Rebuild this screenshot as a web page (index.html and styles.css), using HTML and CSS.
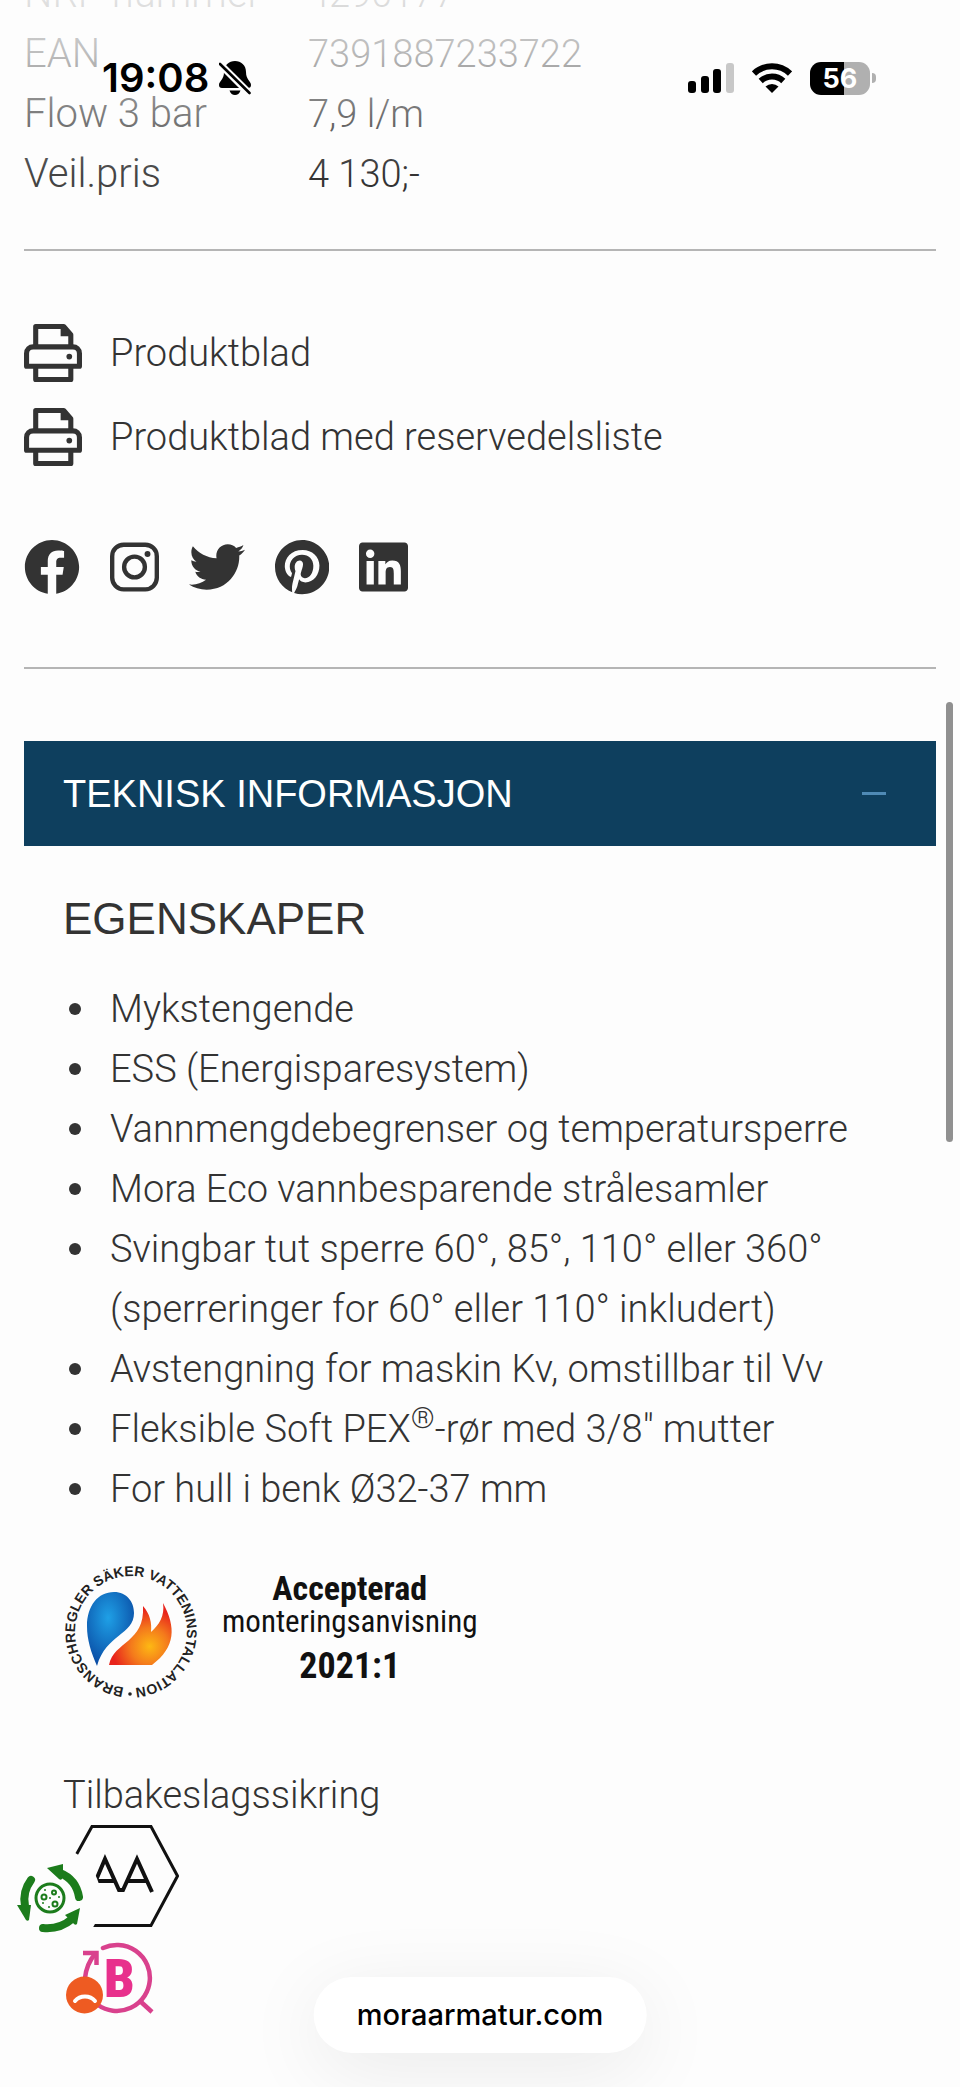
FILE: index.html
```
<!DOCTYPE html>
<html lang="no">
<head>
  <meta charset="UTF-8">
  <meta name="viewport" content="width=device-width, initial-scale=1">
  <title>Mora Armatur</title>
  <link rel="stylesheet" href="styles.css">
</head>
<body>
  <header class="statusbar">
    <div class="status-left">
      <span class="time">19:08</span>
      <svg class="bell" viewBox="0 0 32 34" aria-hidden="true">
        <path d="M16 0c6 0 11 4 11 11 0 8 5 9 5 13 0 2-1 3-3 3H3c-2 0-3-1-3-3 0-4 5-5 5-13C5 4 10 0 16 0z"/>
        <path d="M10.500 29.500h11c-1 3-3 4.500-5.500 4.500s-4.500-1.500-5.500-4.500z"/>
        <path d="M0 2l31 31" stroke="#fdfdfd" stroke-width="7"/>
        <path d="M1 3l29.500 29" stroke="#000" stroke-width="2.600" stroke-linecap="round"/>
      </svg>
    </div>
    <div class="status-right">
      <svg class="signal" viewBox="0 0 46 30" aria-hidden="true">
        <rect y="18" width="8" height="12" rx="3"/>
        <rect x="13" y="13" width="8" height="17" rx="3"/>
        <rect x="25" y="6" width="8" height="24" rx="3"/>
        <rect x="38" width="8" height="30" rx="3" fill="#c8c8c8"/>
      </svg>
      <svg class="wifi" viewBox="0 0 40 30" aria-hidden="true">
        <g fill="none" stroke="#000" stroke-width="6">
          <path d="M2 10.500a26 26 0 0 1 36 0"/>
          <path d="M8.700 18a16.500 16.500 0 0 1 22.600 0"/>
        </g>
        <path d="M20 30l-6.500-6.500a9.500 9.500 0 0 1 13 0z"/>
      </svg>
      <div class="battery"><span class="battery-level">56</span><i class="battery-nub"></i></div>
    </div>
  </header>

  <main class="page">
    <table class="specs">
      <tr><th scope="row">NRF-nummer</th><td>4290177</td></tr>
      <tr><th scope="row">EAN</th><td>7391887233722</td></tr>
      <tr><th scope="row">Flow 3 bar</th><td>7,9 l/m</td></tr>
      <tr><th scope="row">Veil.pris</th><td>4 130;-</td></tr>
    </table>

    <hr>

    <svg width="0" height="0" class="defs" aria-hidden="true">
      <symbol id="printer" viewBox="0 0 57 57">
        <g fill="none" stroke="#333" stroke-width="5" stroke-linejoin="round">
          <path d="M11.500 21V2.500H39l7 8V21"/>
          <path d="M2.500 41.500V29c0-4 3-6.500 6.500-6.500h39c3.500 0 6.500 2.500 6.500 6.500v12.500z"/>
          <path d="M11.500 43v11.500H46V43"/>
        </g>
        <path d="M36 2h4l6 7v3H36z" fill="#333"/>
        <circle cx="44.500" cy="32" r="2.800" fill="#333"/>
      </symbol>
    </svg>
    <div class="downloads">
      <a href="#"><svg class="printer"><use href="#printer"/></svg>Produktblad</a>
      <a href="#"><svg class="printer"><use href="#printer"/></svg>Produktblad med reservedelsliste</a>
    </div>

    <nav class="social">
      <a href="#" aria-label="Facebook"><svg viewBox="0 0 512 512"><path d="M504 256C504 119 393 8 256 8S8 119 8 256c0 123.780 90.690 226.380 209.250 245V327.690h-63V256h63v-54.640c0-62.150 37-96.480 93.670-96.480 27.140 0 55.520 4.840 55.520 4.840v61h-31.280c-30.800 0-40.410 19.120-40.410 38.730V256h68.780l-11 71.690h-57.780V501C413.310 482.380 504 379.780 504 256z"/></svg></a>
      <a href="#" aria-label="Instagram"><svg viewBox="0 0 448 512"><rect x="20" y="52" width="408" height="408" rx="105" fill="none" stroke="#333" stroke-width="40"/><circle cx="224" cy="256" r="95" fill="none" stroke="#333" stroke-width="40"/><circle cx="343" cy="137" r="27"/></svg></a>
      <a href="#" aria-label="Twitter"><svg viewBox="0 0 512 512"><path d="M459.370 151.716c.325 4.548.325 9.097.325 13.645 0 138.720-105.583 298.558-298.558 298.558-59.452 0-114.680-17.219-161.137-47.106 8.447.974 16.568 1.299 25.340 1.299 49.055 0 94.213-16.568 130.274-44.832-46.132-.975-84.792-31.188-98.112-72.772 6.498.974 12.995 1.624 19.818 1.624 9.421 0 18.843-1.300 27.614-3.573-48.081-9.747-84.143-51.980-84.143-102.985v-1.299c13.969 7.797 30.214 12.670 47.431 13.319-28.264-18.843-46.781-51.005-46.781-87.391 0-19.492 5.197-37.360 14.294-52.954 51.655 63.675 129.300 105.258 216.365 109.807-1.624-7.797-2.599-15.918-2.599-24.040 0-57.828 46.782-104.934 104.934-104.934 30.213 0 57.502 12.670 76.670 33.137 23.715-4.548 46.456-13.320 66.599-25.340-7.798 24.366-24.366 44.833-46.132 57.827 21.117-2.273 41.584-8.122 60.426-16.243-14.292 20.791-32.161 39.308-52.628 54.253z"/></svg></a>
      <a href="#" aria-label="Pinterest"><svg viewBox="0 0 496 512"><path d="M496 256c0 137-111 248-248 248-25.600 0-50.200-3.900-73.400-11.100 10.100-16.500 25.200-43.500 30.800-65 3-11.600 15.400-59 15.400-59 8.100 15.400 31.700 28.500 56.800 28.500 74.800 0 128.700-68.800 128.700-154.300 0-81.900-66.900-143.200-152.900-143.200-107 0-163.900 71.800-163.900 150.100 0 36.400 19.400 81.700 50.300 96.100 4.700 2.200 7.200 1.200 8.300-3.300.8-3.400 5-20.300 6.900-28.100.6-2.500.3-4.700-1.700-7.100-10.100-12.500-18.300-35.300-18.300-56.600 0-54.700 41.400-107.600 112-107.600 60.900 0 103.600 41.500 103.600 100.900 0 67.100-33.900 113.600-78 113.600-24.300 0-42.600-20.100-36.700-44.800 7-29.500 20.500-61.300 20.500-82.600 0-19-10.200-34.900-31.400-34.900-24.900 0-44.900 25.700-44.900 60.200 0 22 7.400 36.800 7.400 36.800s-24.500 103.800-29 123.200c-5 21.400-3 51.600-.9 71.200C65.400 450.900 0 361.100 0 256 0 119 111 8 248 8s248 111 248 248z"/></svg></a>
      <a href="#" aria-label="LinkedIn"><svg viewBox="0 0 448 512"><path d="M416 32H31.900C14.300 32 0 46.500 0 64.300v383.400C0 465.500 14.300 480 31.900 480H416c17.600 0 32-14.500 32-32.300V64.300c0-17.800-14.400-32.300-32-32.300zM135.400 416H69V202.200h66.500V416zm-33.200-243c-21.300 0-38.500-17.300-38.500-38.500S80.900 96 102.200 96c21.200 0 38.500 17.300 38.500 38.500 0 21.300-17.200 38.500-38.500 38.500zm282.100 243h-66.400V312c0-24.800-.5-56.700-34.500-56.700-34.600 0-39.900 27-39.900 54.900V416h-66.400V202.200h63.700v29.200h.9c8.900-16.800 30.600-34.500 62.200-34.500 66.500 0 78.800 43.800 78.800 100.900V416z"/></svg></a>
    </nav>

    <hr>

    <section>
      <h2 class="accordion"><button type="button" aria-expanded="true">TEKNISK INFORMASJON<span class="minus"></span></button></h2>
      <div class="panel">
        <h3>EGENSKAPER</h3>
        <ul>
          <li>Mykstengende</li>
          <li>ESS (Energisparesystem)</li>
          <li>Vannmengdebegrenser og temperatursperre</li>
          <li>Mora Eco vannbesparende strålesamler</li>
          <li>Svingbar tut sperre 60°, 85°, 110° eller 360° (sperreringer for 60° eller 110° inkludert)</li>
          <li>Avstengning for maskin Kv, omstillbar til Vv</li>
          <li>Fleksible Soft PEX<sup>®</sup>-rør med 3/8" mutter</li>
          <li>For hull i benk Ø32-37 mm</li>
        </ul>

        <div class="approval">
          <svg class="seal" viewBox="0 0 136 136">
            <defs>
              <path id="ring" d="M62 123.700A56 56 0 1 1 74 123.700"/>
              <radialGradient id="water" cx=".45" cy=".35" r=".65">
                <stop offset="0" stop-color="#1fa0e6"/>
                <stop offset="1" stop-color="#0a4ea6"/>
              </radialGradient>
              <radialGradient id="fire" cx=".65" cy=".7" r=".6">
                <stop offset="0" stop-color="#fdb813"/>
                <stop offset=".5" stop-color="#f47a1c"/>
                <stop offset="1" stop-color="#e8241c"/>
              </radialGradient>
            </defs>
            <text class="seal-text"><textPath href="#ring" startOffset="1">BRANSCHREGLER SÄKER VATTENINSTALLATION</textPath></text>
            <circle cx="67" cy="130" r="1.800" fill="#222"/>
            <path d="M34 102c-6-14-10-26-10-40 0-20 11-34 27-34 13 0 20 10 20 21 0 22-28 21-37 53z" fill="url(#water)"/>
            <path d="M46 101c5-24 36-22 34-59 7 8 9 17 8 26 8-7 14-16 12-29 13 24 13 44-11 62z" fill="url(#fire)"/>
          </svg>
          <div class="approval-text">
            <strong>Accepterad</strong>
            <span>monteringsanvisning</span>
            <strong class="year">2021:1</strong>
          </div>
        </div>

        <p>Tilbakeslagssikring</p>
        <svg class="hexagon" viewBox="0 0 116 102" fill="none" stroke="#111">
          <path d="M29 1.500h59L114.500 51 88 100.500H29L1.500 51z" stroke-width="3"/>
          <path d="M28 67l14-33 14 31h4l14-31 15 33M32 56h19M64 56h20" stroke-width="4"/>
        </svg>
      </div>
    </section>
  </main>

  <button type="button" class="widget cookie" aria-label="Informasjonskapsler">
    <svg viewBox="0 0 66 70">
      <g fill="none" stroke="#1c7c1c" stroke-width="8" stroke-linecap="round">
        <path d="M14 16C8 24 6 32 8 42"/>
        <path d="M43 9c10 4 17 12 19 24"/>
        <path d="M26 64c11 1 21-2 29-9"/>
      </g>
      <g fill="#1c7c1c">
        <path d="M0 41l14 0-2 15c-1 1-2 1-3 0z"/>
        <path d="M30 4l16-4v6l-1 9c-1 1-2 1-3 0z"/>
        <path d="M48 51l15-7-3 16c-1 1-2 1-3 0z"/>
      </g>
      <circle cx="33" cy="34" r="14" fill="none" stroke="#1c7c1c" stroke-width="3"/>
      <g fill="none" stroke="#1c7c1c" stroke-width="2">
        <circle cx="27" cy="33" r="2.500"/><circle cx="37" cy="28.500" r="2"/><circle cx="38" cy="40" r="2.500"/>
      </g>
      <g fill="#1c7c1c">
        <circle cx="33" cy="34" r="1"/><circle cx="42" cy="33" r="1"/><circle cx="32" cy="43" r="1"/><circle cx="28" cy="26" r="1"/><circle cx="26" cy="39" r="1"/>
      </g>
    </svg>
  </button>

  <button type="button" class="widget badge" aria-label="B">
    <svg viewBox="0 0 88 72">
      <g fill="none" stroke="#d9418d" stroke-width="4.500">
        <path d="M37 6A33 33 0 1 1 32 63" stroke-linecap="round"/>
        <path d="M74 59l12 11"/>
        <path d="M19 36c1-9 4-17 10-24"/>
        <path d="M17 11h13.500v12"/>
      </g>
      <text x="38" y="55" class="badge-letter">B</text>
      <circle cx="18.500" cy="53" r="18.500" fill="#ee5b22"/>
      <path d="M9 59c5-6 15-6 20 0" fill="none" stroke="#fff" stroke-width="4" stroke-linecap="round"/>
    </svg>
  </button>

  <div class="scrollbar"></div>
  <a class="address" href="#">moraarmatur.com</a>
</body>
</html>
```
FILE: styles.css
```
* {
  box-sizing: border-box;
}
body {
  margin: 0;
  position: relative;
  min-height: 100vh;
  overflow: hidden;
  background: #fdfdfd;
  color: #333;
  font-family: Roboto, "Liberation Sans", sans-serif;
  font-size: 38px;
  font-weight: 300;
  line-height: 60px;
}
a {
  color: inherit;
  text-decoration: none;
}
button {
  border: 0;
  padding: 0;
  font: inherit;
  cursor: pointer;
}
svg {
  display: block;
}

/* phone status bar, fades the page under it */
.statusbar {
  position: absolute;
  z-index: 2;
  top: 0;
  left: 0;
  right: 0;
  height: 176px;
  padding: 56px 84px 0 102px;
  display: flex;
  justify-content: space-between;
  align-items: flex-start;
  background: linear-gradient(rgba(253,253,253,.85), rgba(253,253,253,.65) 55px, rgba(253,253,253,.3) 115px, rgba(253,253,253,0));
  color: #000;
  font-family: Inter, sans-serif;
}
.status-left, .status-right {
  display: flex;
  align-items: center;
  height: 44px;
}
.status-left {
  gap: 10px;
}
.status-right {
  gap: 18px;
}
.time {
  font-size: 40px;
  font-weight: 600;
}
.bell {
  width: 32px;
  height: 34px;
}
.signal {
  width: 46px;
  height: 30px;
}
.wifi {
  width: 40px;
  height: 30px;
}
.battery {
  display: flex;
  align-items: center;
  gap: 2px;
}
.battery-level {
  width: 60px;
  height: 33px;
  border-radius: 11px;
  background: linear-gradient(90deg, #000 56%, #b0b0b0 56%);
  color: #fff;
  font-size: 27px;
  font-weight: 700;
  line-height: 33px;
  text-align: center;
}
.battery-nub {
  width: 4px;
  height: 10px;
  border-radius: 0 5px 5px 0;
  background: #b0b0b0;
}

/* page is scrolled, so the first row starts above the window */
.page {
  padding: 0 24px;
  margin-top: -36px;
}
.specs {
  width: 100%;
  border-collapse: collapse;
}
.specs th, .specs td {
  padding: 0;
  text-align: left;
}
.specs th {
  width: 284px;
  color: #444;
  font-size: 40px;
  font-weight: 350;
}
hr {
  margin: 72px 0;
  border: 0;
  height: 2px;
  background: #b5b5b5;
}
.specs + hr {
  margin-top: 45px;
}
.defs {
  position: absolute;
}
.downloads {
  display: flex;
  flex-direction: column;
  gap: 24px;
}
.downloads a {
  display: flex;
  align-items: center;
  gap: 28px;
}
.printer {
  width: 58px;
  height: 58px;
}
.social {
  display: flex;
  gap: 30px;
  margin-top: 72px;
}
.social svg {
  height: 56px;
  fill: #333;
}

.accordion {
  margin: 0;
  font-family: "Liberation Sans", Arial, sans-serif;
  font-size: 38px;
  font-weight: 400;
}
.accordion button {
  width: 100%;
  min-height: 105px;
  padding: 0 50px 0 39px;
  display: flex;
  align-items: center;
  justify-content: space-between;
  background: #0e3f5e;
  color: #fff;
}
.minus {
  width: 24px;
  height: 3px;
  background: #4f8ab5;
}
.panel {
  padding: 43px 39px 0;
}
h3 {
  margin: 0;
  font-family: "Liberation Sans", Arial, sans-serif;
  font-size: 44px;
  font-weight: 400;
}
ul {
  margin: 30px 0 0;
  padding-left: 47px;
  list-style: none;
}
li::before {
  content: "";
  display: inline-block;
  width: 12px;
  height: 12px;
  margin: 0 29px 0 -41px;
  border-radius: 50%;
  background: #333;
  vertical-align: 7px;
}
sup {
  font-size: 30px;
  line-height: 0;
}
.approval {
  display: flex;
  align-items: center;
  gap: 23px;
  margin-top: 45px;
}
.seal {
  width: 136px;
  height: 136px;
}
.seal-text {
  font: 700 14px "Liberation Sans", sans-serif;
  fill: #222;
}
.approval-text {
  display: flex;
  flex-direction: column;
  align-items: center;
  color: #111;
  font-family: "Liberation Sans Narrow", "Roboto Condensed", Roboto, sans-serif;
  font-size: 31px;
  font-weight: 400;
  line-height: 34px;
}
.approval-text strong {
  font-size: 34px;
}
.approval-text .year {
  font-size: 36px;
  line-height: 54px;
}
p {
  margin: 65px 0 0;
}
.hexagon {
  width: 116px;
  height: 102px;
}

/* floating things over the page */
.widget {
  position: absolute;
  background: none;
}
.cookie {
  left: -1px;
  bottom: 135px;
  padding: 18px;
  border-radius: 50%;
  background: #fdfdfd;
}
.cookie svg {
  width: 66px;
  height: 70px;
}
.badge {
  left: 66px;
  bottom: 73px;
}
.badge svg {
  width: 88px;
  height: 72px;
}
.badge-letter {
  font: 900 54px "Roboto Condensed", "Liberation Sans Narrow", Roboto, sans-serif;
  fill: #e8308c;
}
.scrollbar {
  position: absolute;
  top: 702px;
  right: 7px;
  width: 7px;
  height: 440px;
  border-radius: 4px;
  background: #909090;
}
.address {
  position: absolute;
  bottom: 34px;
  left: 50%;
  transform: translateX(-50%);
  padding: 8px 43px;
  border-radius: 38px;
  background: #fff;
  box-shadow: 0 16px 80px rgba(0,0,0,.08);
  color: #000;
  font-family: Inter, sans-serif;
  font-size: 29px;
  font-weight: 500;
}
```
